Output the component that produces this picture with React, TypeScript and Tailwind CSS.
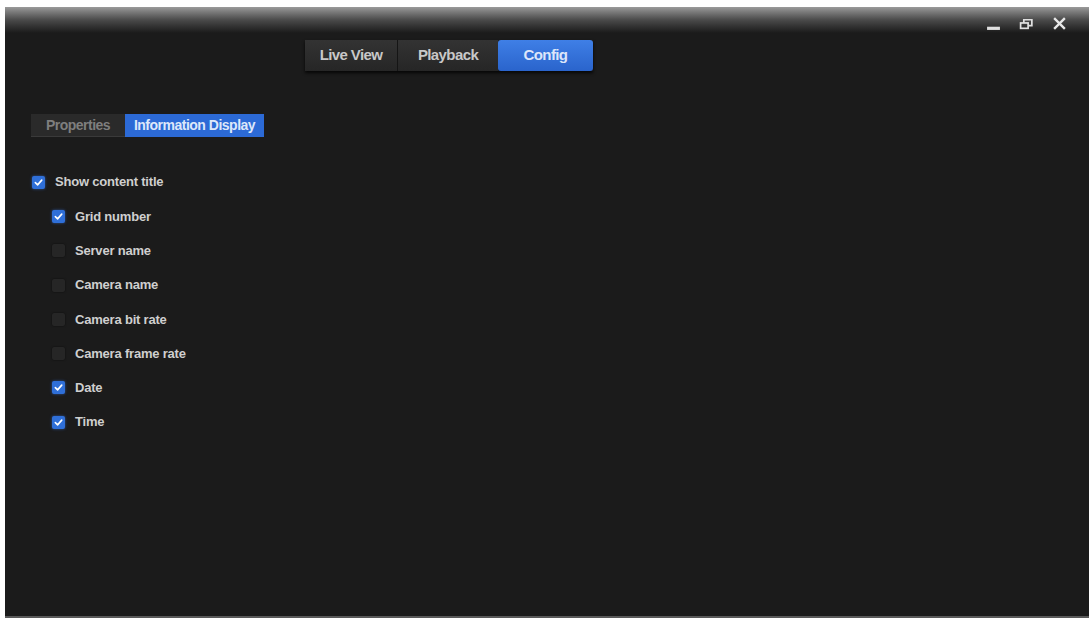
import React from "react";

const Check = ({ on }: { on: boolean }) =>
  on ? (
    <span className="w-[13px] h-[13px] rounded-[2px] bg-[#2f6fd8] flex items-center justify-center shadow-[0_0_3px_rgba(60,120,230,0.6)]">
      <svg width="9" height="9" viewBox="0 0 10 10">
        <path d="M1.5 5.2 L4 7.6 L8.6 2.4" fill="none" stroke="#ffffff" strokeWidth="1.8" strokeLinecap="round" strokeLinejoin="round" />
      </svg>
    </span>
  ) : (
    <span className="w-[13px] h-[13px] rounded-[2px] bg-[#262626] shadow-[0_0_2px_rgba(0,0,0,0.6)]" />
  );

const Row = ({ label, on, indent }: { label: string; on: boolean; indent?: boolean }) => (
  <div className={`flex items-center h-[34.3px] ${indent ? "pl-[52px]" : "pl-[32px]"}`}>
    <Check on={on} />
    <span className="ml-[10px] text-[13px] font-bold text-[#cfcfcf] tracking-[-0.2px]">{label}</span>
  </div>
);

export default function App() {
  return (
    <div className="w-[1092px] h-[621px] bg-white overflow-hidden" style={{ fontFamily: "'Liberation Sans', Arial, sans-serif" }}>
      <div className="ml-[5px] mt-[7px] w-[1084px] h-[611px] bg-[#1b1b1b] border-b-2 border-[#5a5a5a] flex flex-col relative">
        <div className="absolute top-0 left-0 right-0 h-[26px] bg-gradient-to-b from-[#9a9a9a] via-[#4a4a4a] to-[#1b1b1b]" />
        <div className="absolute top-[9px] right-[22px] flex items-center gap-[18px]">
          <svg width="15" height="15" viewBox="0 0 14 14">
            <rect x="1" y="10" width="12" height="3" fill="#e0e0e0" />
          </svg>
          <svg width="15" height="15" viewBox="0 0 14 14">
            <rect x="1.5" y="6.5" width="7" height="5" fill="none" stroke="#e0e0e0" strokeWidth="1.6" />
            <path d="M4.5 6.5 V3.5 H12 V9 H8.5" fill="none" stroke="#e0e0e0" strokeWidth="1.6" />
          </svg>
          <svg width="15" height="15" viewBox="0 0 14 14">
            <path d="M2 2 L12 12 M12 2 L2 12" stroke="#e8e8e8" strokeWidth="2.2" />
          </svg>
        </div>

        <div className="relative flex justify-start pl-[300px] pt-[33px]">
          <div className="flex h-[31px] shadow-[0_2px_3px_rgba(0,0,0,0.8)]">
            <div className="w-[93px] flex items-center justify-center bg-gradient-to-b from-[#333333] to-[#262626] border-r border-[#151515] text-[15px] font-bold text-[#c8c8c8] tracking-[-0.6px]">Live View</div>
            <div className="w-[100px] flex items-center justify-center bg-gradient-to-b from-[#333333] to-[#262626] text-[15px] font-bold text-[#c8c8c8] tracking-[-0.6px]">Playback</div>
            <div className="w-[95px] flex items-center justify-center bg-gradient-to-b from-[#3f7fe6] to-[#2a64cc] rounded-[3px] text-[15px] font-bold text-[#dce6fa] tracking-[-0.6px]">Config</div>
          </div>
        </div>

        <div className="flex pl-[26px] pt-[43px]">
          <div className="flex h-[23px]">
            <div className="w-[94px] flex items-center justify-center bg-[#2a2a2a] border-b border-[#3a3a3a] text-[14px] font-bold text-[#7e7e7e] tracking-[-0.5px]">Properties</div>
            <div className="w-[139px] flex items-center justify-center bg-[#2c6ad6] text-[14px] font-bold text-[#dde7fa] tracking-[-0.5px]">Information Display</div>
          </div>
        </div>

        <div className="flex flex-col pt-[28px] -ml-[5px]">
          <Row label="Show content title" on />
          <Row label="Grid number" on indent />
          <Row label="Server name" on={false} indent />
          <Row label="Camera name" on={false} indent />
          <Row label="Camera bit rate" on={false} indent />
          <Row label="Camera frame rate" on={false} indent />
          <Row label="Date" on indent />
          <Row label="Time" on indent />
        </div>
      </div>
    </div>
  );
}
